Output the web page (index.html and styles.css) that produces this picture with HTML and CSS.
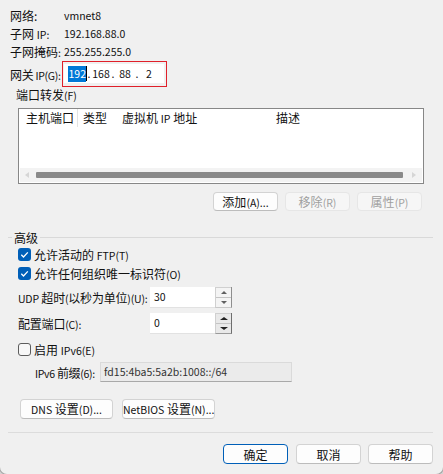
FILE: index.html
```html
<!DOCTYPE html>
<html lang="zh-CN">
<head>
<meta charset="utf-8">
<title>虚拟网络设置</title>
<link rel="stylesheet" href="styles.css">
</head>
<body>
<div class="dialog">
  <div class="info">
    <div class="row"><span class="lbl">网络:</span><span class="en">vmnet8</span></div>
    <div class="row"><span class="lbl">子网 <span class="en">IP:</span></span><span class="en">192.168.88.0</span></div>
    <div class="row"><span class="lbl">子网掩码<span class="en">:</span></span><span class="en">255.255.255.0</span></div>
    <div class="gw">
      <span class="gwl">网关<span class="en"> IP(G):</span></span>
      <div class="ipbox">
        <div class="ipin en">
          <span class="oct"><span class="sel">192</span><span class="caret"></span></span>
          <span class="dot">.</span>
          <span class="oct">168</span>
          <span class="dot">.</span>
          <span class="oct">88</span>
          <span class="dot">.</span>
          <span class="oct">2</span>
        </div>
      </div>
    </div>
  </div>

  <div class="pf">端口转发<span class="en">(F)</span></div>
  <div class="list">
    <div class="lhead">
      <span class="col c1">主机端口</span>
      <span class="col c2">类型</span>
      <span class="col c3">虚拟机 <span class="en">IP</span> 地址</span>
      <span class="col c4">描述</span>
    </div>
    <div class="lbody"></div>
    <div class="hscroll">
      <span class="arr arr-l"></span>
      <span class="thumb"></span>
      <span class="arr arr-r"></span>
    </div>
  </div>

  <div class="btnrow">
    <button class="btn">添加<span class="en">(A)...</span></button>
    <button class="btn dis">移除<span class="en">(R)</span></button>
    <button class="btn dis">属性<span class="en">(P)</span></button>
  </div>

  <div class="grp">
    <span class="gline short"></span>
    <span class="gtitle">高级</span>
    <span class="gline"></span>
  </div>

  <div class="cbrow">
    <span class="cb on"><svg viewBox="0 0 13 13" width="13" height="13"><polyline points="3.3,6.8 5.5,9 9.8,4.4" fill="none" stroke="#fff" stroke-width="1.3"/></svg></span>
    <span class="cblbl">允许活动的 <span class="en">FTP(T)</span></span>
  </div>
  <div class="cbrow">
    <span class="cb on"><svg viewBox="0 0 13 13" width="13" height="13"><polyline points="3.3,6.8 5.5,9 9.8,4.4" fill="none" stroke="#fff" stroke-width="1.3"/></svg></span>
    <span class="cblbl">允许任何组织唯一标识符<span class="en">(O)</span></span>
  </div>

  <div class="spinrow first">
    <span class="slbl"><span class="en">UDP</span> 超时<span class="en">(</span>以秒为单位<span class="en">)(U):</span></span>
    <span class="sinput en">30</span>
    <span class="spin"><span class="sb"><i class="up"></i></span><span class="sb"><i class="down"></i></span></span>
  </div>
  <div class="spinrow second">
    <span class="slbl">配置端口<span class="en">(C):</span></span>
    <span class="sinput en">0</span>
    <span class="spin dark"><span class="sb"><i class="up"></i></span><span class="sb"><i class="down"></i></span></span>
  </div>

  <div class="cbrow v6">
    <span class="cb off"></span>
    <span class="cblbl">启用 <span class="en">IPv6(E)</span></span>
  </div>
  <div class="v6row">
    <span class="v6lbl"><span class="en">IPv6 </span>前缀<span class="en">(6):</span></span>
    <span class="v6input en">fd15:4ba5:5a2b:1008::/64</span>
  </div>

  <div class="netbtns">
    <button class="btn wide"><span class="en">DNS</span> 设置<span class="en">(D)...</span></button>
    <button class="btn wide"><span class="en">NetBIOS</span> 设置<span class="en">(N)...</span></button>
  </div>

  <div class="sep"></div>

  <div class="okrow">
    <button class="btn def">确定</button>
    <button class="btn">取消</button>
    <button class="btn">帮助</button>
  </div>
</div>
</body>
</html>
```
FILE: styles.css
```css
* { box-sizing: border-box; }
html, body {
  margin: 0;
  padding: 0;
  width: 443px;
  height: 474px;
  overflow: hidden;
  background: #d4d4d4;
}
body {
  font-family: "Noto Sans CJK SC", sans-serif;
  font-size: 12px;
  color: #111;
  white-space: nowrap;
}
.en { font-size: 10.5px; }
.dialog {
  width: 445px;
  height: 475px;
  margin-left: -1px;
  background: #f0f0f0;
  border: 1px solid #a6a6a6;
  border-top: none;
  border-radius: 0 0 8px 8px;
  padding-top: 7px;
  overflow: hidden;
}
.info { margin-left: 10px; }
.row { display: flex; height: 18px; line-height: 18px; }
.lbl { width: 54px; flex: none; }
.gw { display: flex; align-items: center; height: 26px; }
.gwl { width: 52px; flex: none; letter-spacing: -0.3px; }
.ipbox {
  width: 105px;
  height: 26px;
  flex: none;
  border: 1px solid #e0202a;
  padding: 2px 2px 3px 1px;
}
.ipin {
  height: 100%;
  background: #fff;
  display: flex;
  align-items: center;
  padding-left: 4px;
  line-height: 16px;
}
.oct { width: 18px; text-align: center; display: inline-flex; justify-content: center; align-items: center; }
.dot { width: 6px; text-align: center; }
.sel { background: #0078d7; color: #fff; height: 16px; line-height: 16px; padding: 0 0.5px; }
.caret { display: inline-block; width: 1px; height: 15px; background: #000; margin-right: -1px; }

.pf { margin-left: 16px; height: 16px; line-height: 16px; }
.list {
  margin: 5px 0 0 18px;
  width: 406px;
  height: 76px;
  border: 1px solid #878787;
  background: #fff;
  display: flex;
  flex-direction: column;
}
.lhead { display: flex; height: 17px; line-height: 17px; }
.col { display: block; flex: none; }
.c1 { width: 59px; padding-left: 7px; border-right: 1px solid #e3e3e3; height: 18px; }
.c2 { width: 38px; padding-left: 5px; }
.c3 { width: 154px; padding-left: 6px; }
.c4 { padding-left: 6px; }
.lbody { flex: 1; }
.hscroll {
  height: 14px;
  margin: 0 1px 1px 1px;
  background: #f3f3f3;
  display: flex;
  align-items: center;
}
.arr { width: 0; height: 0; border-top: 3px solid transparent; border-bottom: 3px solid transparent; }
.arr-l { border-right: 4px solid #d6d6d6; margin-left: 5px; }
.arr-r { border-left: 4px solid #d6d6d6; margin-left: 9px; }
.thumb { width: 367px; height: 6px; background: #8a8a8a; border-radius: 1px; margin-left: 7px; }

.btn {
  font-family: "Noto Sans CJK SC", sans-serif;
  font-size: 12px;
  color: #111;
  width: 65px;
  height: 20px;
  padding: 0;
  line-height: 17px;
  white-space: nowrap;
  background: #fdfdfd;
  border: 1px solid #d3d3d3;
  border-bottom-color: #bcbcbc;
  border-radius: 4px;
  flex: none;
}
.btn.dis { background: #f6f6f6; border-color: #e6e6e6; color: #a0a0a0; }
.btn.def { border: 1px solid #005fb8; }
.btn.wide { width: 93px; }

.btnrow { display: flex; justify-content: flex-end; gap: 7px; margin: 8px 21px 0 0; height: 19px; }
.btnrow .btn { height: 19px; }

.grp { display: flex; align-items: center; height: 13px; margin: 20px 10px 0 8px; }
.gline { flex: 1; height: 1px; background: #d9d9d9; }
.gline.short { flex: 0 0 4px; }
.gtitle { padding: 0 2px; line-height: 13px; }

.cbrow { display: flex; align-items: center; height: 19px; margin-left: 18px; }
.grp + .cbrow { margin-top: 1px; }
.cb { width: 13px; height: 13px; border-radius: 3px; display: block; flex: none; }
.cb svg { display: block; }
.cb.on { background: #005fb8; }
.cb.off { border: 1px solid #5c5c5c; background: #f7f7f7; }
.cblbl { margin-left: 3px; }

.spinrow { display: flex; align-items: center; height: 21px; margin-left: 18px; }
.spinrow.first { margin-top: 4px; }
.spinrow.second { margin-top: 5px; }
.slbl { width: 132px; flex: none; letter-spacing: -0.2px; }
.sinput {
  width: 65px;
  height: 21px;
  flex: none;
  background: #fff;
  padding-left: 4px;
  line-height: 20px;
  border-bottom: 1px solid #e2e2e2;
}
.spin {
  width: 17px;
  height: 21px;
  flex: none;
  display: flex;
  flex-direction: column;
  border-left: 1px solid #d0d0d0;
  border-right: 1px solid #8e8e8e;
  border-bottom: 1px solid #c8c8c8;
  background: #f4f4f4;
}
.sb { flex: 1; display: flex; align-items: center; justify-content: center; border-top: 1px solid #d0d0d0; }
.sb + .sb { border-top: 1px solid #c4c4c4; }
.up { width: 0; height: 0; border-left: 3px solid transparent; border-right: 3px solid transparent; border-bottom: 3px solid #606060; }
.down { width: 0; height: 0; border-left: 3px solid transparent; border-right: 3px solid transparent; border-top: 3px solid #606060; }
.spin.dark { border-right-color: #6e6e6e; border-bottom-color: #9a9a9a; background: #e9e9e9; }
.spin.dark .up { border-bottom-color: #222; border-left-width: 4px; border-right-width: 4px; }
.spin.dark .down { border-top-color: #222; border-left-width: 4px; border-right-width: 4px; }

.cbrow.v6 { margin-top: 6px; }
.v6row { display: flex; align-items: center; height: 20px; margin: 3px 0 0 35px; }
.v6lbl { width: 65px; flex: none; letter-spacing: -0.3px; }
.v6input {
  width: 192px;
  height: 20px;
  flex: none;
  background: #ebebeb;
  border: 1px solid #dadada;
  border-bottom-color: #a9a9a9;
  padding-left: 3px;
  line-height: 18px;
  color: #333;
}

.netbtns { display: flex; gap: 9px; margin: 17px 0 0 20px; height: 20px; }
.sep { height: 1px; background: #dcdcdc; margin: 13px 10px 0 8px; }
.okrow { display: flex; justify-content: flex-end; gap: 7px; margin: 11px 10px 0 0; height: 20px; }
.okrow .btn.def { margin-right: 1px; }
```
